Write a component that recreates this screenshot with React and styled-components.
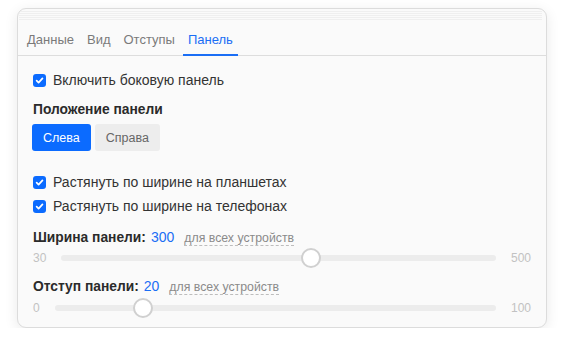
import styled, { createGlobalStyle } from "styled-components";

const GlobalStyle = createGlobalStyle`
  body {
    margin: 0;
    background: #ffffff;
    font-family: "Liberation Sans", Arial, sans-serif;
  }
`;

const Card = styled.div`
  width: 530px;
  margin: 8px 0 0 17px;
  box-sizing: border-box;
  background: #fafafa;
  border: 1px solid #dcdcdc;
  border-radius: 9px;
  box-shadow: 0 3px 14px rgba(0, 0, 0, 0.09);
  overflow: hidden;
`;

const TopStrip = styled.div`
  height: 9px;
  margin: 2px 4px 0 1px;
  background: repeating-linear-gradient(
    to bottom,
    #ececec 0px,
    #ececec 1px,
    transparent 1px,
    transparent 2px
  );
  opacity: 0.8;
`;

const TabList = styled.div`
  display: flex;
  gap: 3px;
  padding: 0 4px;
  border-bottom: 1px solid #dddddd;
`;

const Tab = styled.div`
  padding: 12px 5px 6px;
  line-height: 16px;
  font-size: 13px;
  color: ${(p) => (p.$active ? "#1a6ef5" : "#7a7a7a")};
  border-bottom: 2px solid ${(p) => (p.$active ? "#1a6ef5" : "transparent")};
  margin-bottom: -1px;
`;

const Content = styled.div`
  padding: 16px 15px 9px;
  display: flex;
  flex-direction: column;
`;

const CheckRow = styled.label`
  display: flex;
  align-items: center;
  gap: 7px;
  height: 16px;
  margin-bottom: ${(p) => p.$mb || 0}px;
  font-size: 14px;
  color: #333333;
`;

const Box = styled.span`
  width: 13px;
  height: 13px;
  border-radius: 3px;
  background: #0b6bff;
  display: flex;
  align-items: center;
  justify-content: center;
  flex-shrink: 0;
`;

const Heading = styled.div`
  font-size: 13.8px;
  font-weight: bold;
  color: #2b2b2b;
  line-height: 16px;
  margin-bottom: ${(p) => p.$mb || 0}px;
  display: flex;
  align-items: baseline;
`;

const Value = styled.span`
  color: #1a6ef5;
  font-weight: normal;
  font-size: 14px;
  margin-left: 5px;
`;

const Hint = styled.span`
  font-weight: normal;
  font-size: 12.3px;
  color: #8a8a8a;
  margin-left: 10px;
  border-bottom: 1px dashed #bdbdbd;
  line-height: 14px;
`;

const ButtonGroup = styled.div`
  display: flex;
  gap: 4px;
  margin: 0 0 23px -1px;
`;

const Button = styled.div`
  height: 27px;
  padding: 0 ${(p) => (p.$active ? 11 : 11)}px;
  border-radius: 3px;
  display: flex;
  align-items: center;
  font-size: 12.5px;
  background: ${(p) => (p.$active ? "#0b6bff" : "#ededed")};
  color: ${(p) => (p.$active ? "#ffffff" : "#666666")};
`;

const SliderRow = styled.div`
  display: flex;
  align-items: center;
  gap: 15px;
  height: 20px;
  margin-bottom: ${(p) => p.$mb || 0}px;
`;

const Limit = styled.span`
  font-size: 12px;
  color: #c2c2c2;
`;

const Track = styled.div`
  flex: 1;
  height: 6px;
  border-radius: 3px;
  background: #ececec;
  position: relative;
`;

const Thumb = styled.div`
  position: absolute;
  top: 50%;
  width: 16px;
  height: 16px;
  border-radius: 50%;
  background: #ffffff;
  border: 2px solid #d0d0d0;
  transform: translate(-50%, -50%);
`;

const Check = () => (
  <Box>
    <svg width="9" height="9" viewBox="0 0 10 10">
      <path d="M1.8 5.2 L4 7.4 L8.3 2.6" fill="none" stroke="#fff" strokeWidth="1.9" strokeLinecap="round" strokeLinejoin="round" />
    </svg>
  </Box>
);

const Slider = ({ min, max, value, mb }) => (
  <SliderRow $mb={mb}>
    <Limit>{min}</Limit>
    <Track>
      <Thumb style={{ left: `${((value - min) / (max - min)) * 100}%` }} />
    </Track>
    <Limit>{max}</Limit>
  </SliderRow>
);

const tabs = ["Данные", "Вид", "Отступы", "Панель"];

export default function App() {
  return (
    <>
      <GlobalStyle />
      <Card>
        <TopStrip />
        <TabList>
          {tabs.map((t) => (
            <Tab key={t} $active={t === "Панель"}>{t}</Tab>
          ))}
        </TabList>
        <Content>
          <CheckRow $mb={14}>
            <Check />
            Включить боковую панель
          </CheckRow>
          <Heading $mb={6}>Положение панели</Heading>
          <ButtonGroup>
            <Button $active>Слева</Button>
            <Button>Справа</Button>
          </ButtonGroup>
          <CheckRow $mb={8}>
            <Check />
            Растянуть по ширине на планшетах
          </CheckRow>
          <CheckRow $mb={15}>
            <Check />
            Растянуть по ширине на телефонах
          </CheckRow>
          <Heading $mb={2}>
            Ширина панели:<Value>300</Value>
            <Hint>для всех устройств</Hint>
          </Heading>
          <Slider min={30} max={500} value={300} mb={10} />
          <Heading $mb={3}>
            Отступ панели:<Value>20</Value>
            <Hint>для всех устройств</Hint>
          </Heading>
          <Slider min={0} max={100} value={20} />
        </Content>
      </Card>
    </>
  );
}
